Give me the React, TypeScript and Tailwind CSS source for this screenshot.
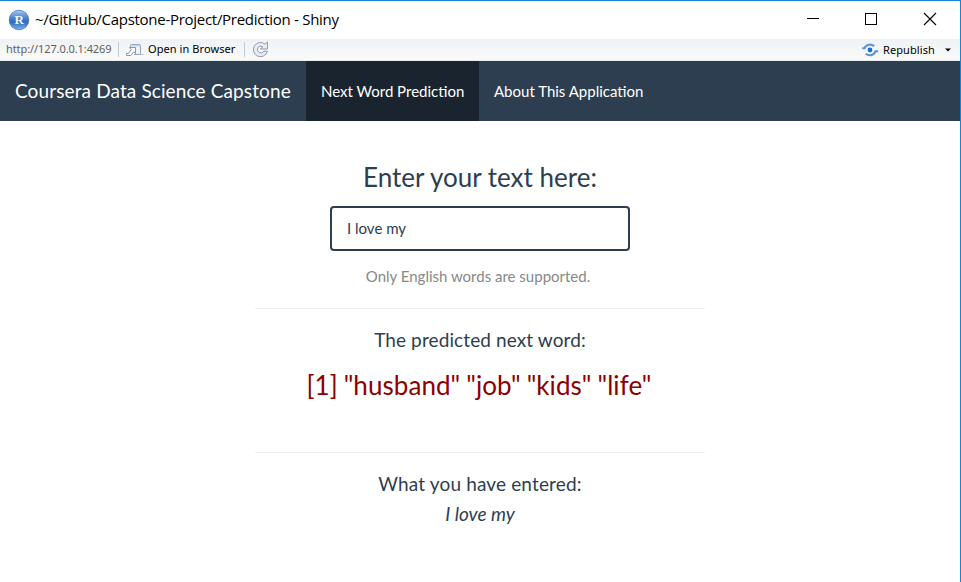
import React from "react";

function RLogo() {
  return (
    <svg width="22" height="22" viewBox="0 0 22 22" className="shrink-0">
      <defs>
        <linearGradient id="ball" x1="0" y1="0" x2="0" y2="1">
          <stop offset="0" stopColor="#a6caf3" />
          <stop offset="0.4" stopColor="#4a83cf" />
          <stop offset="0.6" stopColor="#2f69ba" />
          <stop offset="1" stopColor="#79b4f4" />
        </linearGradient>
      </defs>
      <circle cx="11" cy="11" r="9.8" fill="url(#ball)" stroke="#3a6ab2" strokeWidth="0.7" />
      <text x="11.2" y="15.2" textAnchor="middle" fontFamily="Liberation Serif, serif" fontWeight="bold" fontSize="13" fill="#f4f8ff">R</text>
    </svg>
  );
}

function OpenIcon() {
  return (
    <svg width="19" height="14" viewBox="0 0 19 14" fill="none" className="shrink-0">
      <path d="M4.5 5.5V2.5Q4.5 1.5 5.5 1.5H13.5Q14.5 1.5 14.5 2.5V11.5H8" fill="#eef3f9" stroke="#94a5bc" />
      <path d="M5 2.8H14" stroke="#c2d7f0" strokeWidth="1.6" />
      <path d="M14 11.5H17.5" stroke="#b4bdc9" />
      <path d="M3.5 4.5H9.5V10.5L7.7 8.9L4.8 12.5H0.5V10.5H2.5L5.2 6.4Z" fill="#fafbfd" stroke="#8c97a8" strokeLinejoin="round" />
    </svg>
  );
}

function RefreshIcon() {
  return (
    <svg width="18" height="17" viewBox="0 0 18 17" fill="none" className="shrink-0">
      <path
        d="M13 3.1L15.5 1V8H8.5L10.7 5.7A3.4 3.4 0 1 0 11.8 10.2H15.4A7.1 7.1 0 1 1 13 3.1Z"
        fill="#e8edf4"
        stroke="#8f9cb3"
        strokeLinejoin="round"
      />
    </svg>
  );
}

function PublishIcon() {
  return (
    <svg width="17" height="14" viewBox="0 0 17 14" fill="none" className="shrink-0">
      <circle cx="8" cy="7" r="2.4" fill="#1a6fe0" />
      <path d="M0.2 5.2H2.6C4 1.2 9 .6 12.2 3.1" stroke="#5e93dd" strokeWidth="2.1" />
      <path d="M16.2 8.2H13.5C12 12.6 7 13.4 3.8 10.7" stroke="#5e93dd" strokeWidth="2.1" />
    </svg>
  );
}

function TitleBar() {
  return (
    <header className="flex h-[38px] items-center bg-white">
      <div className="flex flex-1 items-center pl-2 text-black">
        <RLogo />
        <span className="ml-[5px] whitespace-nowrap pb-0.5 font-['Open_Sans','Noto_Sans',sans-serif] text-[15px] leading-5 tracking-[-0.28px]">
          ~/GitHub/Capstone-Project/Prediction - Shiny
        </span>
      </div>
      <svg width="154" height="38" viewBox="0 0 154 38" fill="none" stroke="#000" shapeRendering="crispEdges">
        <path d="M1 17.5H13" />
        <rect x="59.5" y="12.5" width="11" height="11" />
        <path d="M118 12L130 24M130 12L118 24" shapeRendering="auto" strokeWidth="1.1" />
      </svg>
    </header>
  );
}

function ToolBar() {
  return (
    <div className="flex h-[22px] items-center border-b border-[#e8eeee] bg-linear-to-b from-[#eef2f4] to-[#fafafa] pl-1.5 font-['Noto_Sans',sans-serif] text-[11px] text-black">
      <span className="w-28 whitespace-nowrap tracking-[-0.09px] text-[#5f5f5f]">http://127.0.0.1:4269</span>
      <span className="h-[15px] w-px bg-[#c7cacc]" />
      <span className="ml-[7px] flex"><OpenIcon /></span>
      <span className="ml-[3px] w-[96px] whitespace-nowrap tracking-[0.08px]">Open in Browser</span>
      <span className="h-[15px] w-px bg-[#c7cacc]" />
      <span className="ml-[7px] flex"><RefreshIcon /></span>
      <div className="ml-auto flex items-center pr-[9px]">
        <PublishIcon />
        <span className="ml-1 w-[62px] whitespace-nowrap pt-0.5 tracking-[0.1px]">Republish</span>
        <svg width="6" height="4" viewBox="0 0 6 4"><path d="M0 0.5H6L3 3.5Z" fill="#000" /></svg>
      </div>
    </div>
  );
}

function NavBar() {
  return (
    <nav className="flex h-[60px] bg-[#2c3e50] text-[15px] leading-[60px] text-white">
      <span className="w-[306px] whitespace-nowrap pl-[15px] text-[19px] tracking-[0.12px]">Coursera Data Science Capstone</span>
      <a className="w-[173px] whitespace-nowrap bg-[#1a242f] pl-[15px]">Next Word Prediction</a>
      <a className="whitespace-nowrap pl-[15px]">About This Application</a>
    </nav>
  );
}

export default function App() {
  return (
    <div className="flex h-[582px] w-[961px] flex-col overflow-hidden border-t border-r border-[#1883d7] bg-white font-[Lato,sans-serif] text-[#2c3e50]">
      <TitleBar />
      <ToolBar />
      <NavBar />
      <main className="mx-auto flex w-[450px] flex-col items-center text-center">
        <h3 className="mt-[42px] text-[26px] leading-[29px]">Enter your text here:</h3>
        <input
          defaultValue="I love my"
          className="mt-[14px] h-[45px] w-[300px] rounded border-2 border-[#2c3e50] px-[15px] pb-0.5 text-[15px] outline-none"
        />
        <p className="mt-[15px] mr-1 text-[15px] leading-[21px] text-[#888]">Only English words are supported.</p>
        <hr className="mt-[21px] w-full border-[#ecf0f1]" />
        <h4 className="mt-5 text-[19px] leading-[21px] tracking-[0.11px]">The predicted next word:</h4>
        <p className="mt-[21px] mr-0.5 whitespace-nowrap text-[26px] leading-[29px] tracking-[0.06px] text-[#8b0000] [word-spacing:-0.8px]">
          [1] "husband" "job" "kids" "life"
        </p>
        <hr className="mt-[52px] w-full border-[#ecf0f1]" />
        <h4 className="mt-5 text-[19px] leading-[21px] tracking-[0.15px]">What you have entered:</h4>
        <em className="mt-[9px] text-[19px] leading-[21px]">I love my</em>
      </main>
    </div>
  );
}
